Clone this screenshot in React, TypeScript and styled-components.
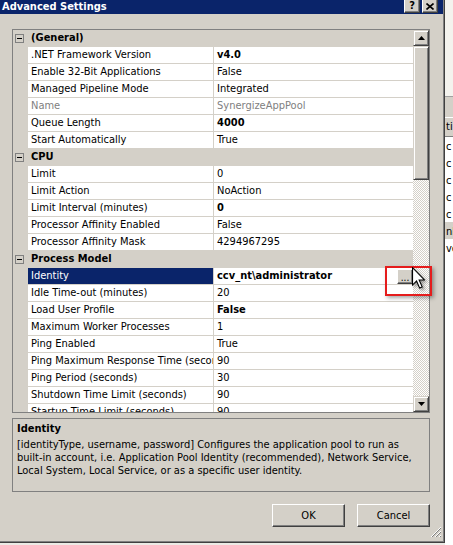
import React from 'react';
import styled, { createGlobalStyle } from 'styled-components';

const FACE = '#d4d0c8';
const NAVY = '#0a246a';

const GlobalStyle = createGlobalStyle`
  html, body {
    margin: 0;
    padding: 0;
    background: #fff;
    overflow: hidden;
  }
  body {
    font-family: "DejaVu Sans Condensed", "DejaVu Sans", "Liberation Sans", sans-serif;
    font-stretch: condensed;
    font-size: 11px;
    color: #000;
  }
`;

const Screen = styled.div`
  position: relative;
  display: flex;
  width: 453px;
  height: 545px;
  overflow: hidden;
  background: #ecebe6;
`;

const Dialog = styled.div`
  position: relative;
  flex: none;
  width: 445px;
  height: 543px;
  box-sizing: border-box;
  display: flex;
  flex-direction: column;
  background: ${FACE};
  border-right: 1px solid #404040;
  border-bottom: 1px solid #404040;
  box-shadow: inset -1px -1px 0 #808080;
`;

const TitleBar = styled.div`
  height: 14px;
  flex: none;
  display: flex;
  align-items: flex-start;
  padding: 0 5px 0 2px;
  margin-right: 1px;
  background: ${NAVY};
  color: #fff;
  font-weight: bold;
  line-height: 13px;
`;

const TitleText = styled.span`
  flex: 1;
  white-space: nowrap;
`;

const CaptionButton = styled.div<{ $gap?: number }>`
  width: 16px;
  height: 13px;
  margin-left: ${p => p.$gap ?? 0}px;
  box-sizing: border-box;
  display: flex;
  align-items: center;
  justify-content: center;
  background: ${FACE};
  color: #000;
  border-left: 1px solid #fff;
  border-right: 1px solid #404040;
  border-bottom: 1px solid #404040;
  box-shadow: inset -1px -1px 0 #808080;
  font-size: 11px;
  font-weight: bold;
  line-height: 12px;
`;

const Body = styled.div`
  flex: 1;
  display: flex;
  flex-direction: column;
  padding: 15px 14px 0 12px;
`;

const Grid = styled.div`
  height: 384px;
  flex: none;
  display: flex;
  box-sizing: border-box;
  border: 1px solid #808080;
  background: #fff;
`;

const Rows = styled.div`
  flex: 1;
  overflow: hidden;
`;

const Row = styled.div`
  display: grid;
  grid-template-columns: 15px 186px 1fr;
  height: 17px;
  box-sizing: border-box;
  border-bottom: 1px solid ${FACE};
  line-height: 16px;
  white-space: nowrap;
`;

const Margin = styled.div`
  background: ${FACE};
  display: flex;
  align-items: center;
  padding-left: 2px;
`;

const CategoryName = styled.div`
  grid-column: 2 / 4;
  background: ${FACE};
  font-weight: bold;
  padding-left: 3px;
`;

const Label = styled.div<{ $selected?: boolean; $dim?: boolean }>`
  padding-left: 3px;
  overflow: hidden;
  border-right: 1px solid ${FACE};
  background: ${p => (p.$selected ? NAVY : '#fff')};
  color: ${p => (p.$selected ? '#fff' : p.$dim ? '#808080' : '#000')};
`;

const Value = styled.div<{ $bold?: boolean; $dim?: boolean }>`
  display: flex;
  align-items: center;
  padding-left: 3px;
  overflow: hidden;
  font-weight: ${p => (p.$bold ? 'bold' : 'normal')};
  color: ${p => (p.$dim ? '#808080' : '#000')};
`;

const EllipsisButton = styled.div`
  margin-left: auto;
  width: 16px;
  height: 15px;
  box-sizing: border-box;
  display: flex;
  align-items: flex-end;
  justify-content: center;
  background: ${FACE};
  border-top: 1px solid #fff;
  border-left: 1px solid #fff;
  border-right: 1px solid #404040;
  border-bottom: 1px solid #404040;
  box-shadow: inset -1px -1px 0 #808080;
  font-weight: normal;
  font-size: 10px;
  line-height: 11px;
`;

const ScrollBar = styled.div`
  width: 16px;
  flex: none;
  display: flex;
  flex-direction: column;
`;

const ScrollButton = styled.div`
  height: 16px;
  flex: none;
  box-sizing: border-box;
  display: flex;
  align-items: center;
  justify-content: center;
  background: ${FACE};
  border-top: 1px solid ${FACE};
  border-left: 1px solid ${FACE};
  border-right: 1px solid #404040;
  border-bottom: 1px solid #404040;
  box-shadow: inset 1px 1px 0 #fff, inset -1px -1px 0 #808080;
`;

const Thumb = styled(ScrollButton)`
  height: 134px;
`;

const Track = styled.div`
  flex: 1;
  background-color: #fff;
  background-image: conic-gradient(${FACE} 25%, #fff 0 50%, ${FACE} 0 75%, #fff 0);
  background-size: 2px 2px;
`;

const Description = styled.div`
  margin-top: 5px;
  height: 74px;
  flex: none;
  box-sizing: border-box;
  border: 1px solid #808080;
  padding: 3px 4px;
  line-height: 13px;
`;

const DescTitle = styled.div`
  font-weight: bold;
  margin-bottom: 3px;
`;

const DescLine = styled.div`
  white-space: nowrap;
`;

const ButtonRow = styled.div`
  margin-top: 12px;
  display: flex;
  justify-content: flex-end;
  gap: 12px;
`;

const PushButton = styled.div`
  width: 73px;
  height: 23px;
  box-sizing: border-box;
  display: flex;
  align-items: center;
  justify-content: center;
  background: ${FACE};
  border-top: 1px solid #fff;
  border-left: 1px solid #fff;
  border-right: 1px solid #404040;
  border-bottom: 1px solid #404040;
  box-shadow: inset -1px -1px 0 #808080;
`;

const Grip = styled.svg`
  position: absolute;
  right: 2px;
  bottom: 4px;
`;

const BackWindow = styled.div`
  flex: 1;
  display: flex;
  flex-direction: column;
  background: #fff;
  overflow: hidden;
  white-space: nowrap;
`;

const BackTop = styled.div`
  height: 96px;
  flex: none;
  background: #f4f3ee;
`;

const BackBox = styled.div`
  height: 21px;
  flex: none;
  box-sizing: border-box;
  border-top: 1px solid #a0a0a0;
  background: ${FACE};
`;

const BackHeader = styled.div`
  height: 20px;
  flex: none;
  box-sizing: border-box;
  border-top: 1px solid #fff;
  border-bottom: 1px solid #808080;
  background: ${FACE};
  line-height: 18px;
  padding-left: 1px;
`;

const BackItem = styled.div<{ $selected?: boolean }>`
  height: 17px;
  flex: none;
  line-height: 19px;
  padding-left: 1px;
  background: ${p => (p.$selected ? FACE : 'transparent')};
`;

const Annotation = styled.div`
  position: absolute;
  left: 385px;
  top: 266px;
  width: 47px;
  height: 30px;
  box-sizing: border-box;
  border: 2px solid #e51c1c;
  box-shadow: 2px 2px 4px rgba(0, 0, 0, 0.35);
`;

const Cursor = styled.svg`
  position: absolute;
  left: 412px;
  top: 267px;
  filter: drop-shadow(2px 2px 1.5px rgba(0, 0, 0, 0.35));
`;

type Item = { label: string; value: string; bold?: boolean; dim?: boolean; selected?: boolean };
type Category = { name: string; items: Item[] };

const categories: Category[] = [
  {
    name: '(General)',
    items: [
      { label: '.NET Framework Version', value: 'v4.0', bold: true },
      { label: 'Enable 32-Bit Applications', value: 'False' },
      { label: 'Managed Pipeline Mode', value: 'Integrated' },
      { label: 'Name', value: 'SynergizeAppPool', dim: true },
      { label: 'Queue Length', value: '4000', bold: true },
      { label: 'Start Automatically', value: 'True' },
    ],
  },
  {
    name: 'CPU',
    items: [
      { label: 'Limit', value: '0' },
      { label: 'Limit Action', value: 'NoAction' },
      { label: 'Limit Interval (minutes)', value: '0', bold: true },
      { label: 'Processor Affinity Enabled', value: 'False' },
      { label: 'Processor Affinity Mask', value: '4294967295' },
    ],
  },
  {
    name: 'Process Model',
    items: [
      { label: 'Identity', value: 'ccv_nt\\administrator', bold: true, selected: true },
      { label: 'Idle Time-out (minutes)', value: '20' },
      { label: 'Load User Profile', value: 'False', bold: true },
      { label: 'Maximum Worker Processes', value: '1' },
      { label: 'Ping Enabled', value: 'True' },
      { label: 'Ping Maximum Response Time (seconds)', value: '90' },
      { label: 'Ping Period (seconds)', value: '30' },
      { label: 'Shutdown Time Limit (seconds)', value: '90' },
      { label: 'Startup Time Limit (seconds)', value: '90' },
    ],
  },
];

function MinusBox() {
  return (
    <svg width="9" height="9" viewBox="0 0 9 9">
      <rect x="0.5" y="0.5" width="8" height="8" fill="none" stroke="#808080" />
      <path d="M2 4.5h5" stroke="#000" />
    </svg>
  );
}

function Arrow({ down }: { down?: boolean }) {
  return (
    <svg width="7" height="4" viewBox="0 0 7 4">
      <path d={down ? 'M0 0h7L3.5 4z' : 'M3.5 0L7 4H0z'} fill="#000" />
    </svg>
  );
}

export default function App() {
  return (
    <Screen>
      <GlobalStyle />
      <Dialog>
        <TitleBar>
          <TitleText>Advanced Settings</TitleText>
          <CaptionButton>?</CaptionButton>
          <CaptionButton $gap={2}>
            <svg width="8" height="7" viewBox="0 0 8 7">
              <path d="M0.5 0.5l7 6M7.5 0.5l-7 6" stroke="#000" strokeWidth="1.6" />
            </svg>
          </CaptionButton>
        </TitleBar>
        <Body>
          <Grid>
            <Rows>
              {categories.map(cat => (
                <React.Fragment key={cat.name}>
                  <Row>
                    <Margin>
                      <MinusBox />
                    </Margin>
                    <CategoryName>{cat.name}</CategoryName>
                  </Row>
                  {cat.items.map(it => (
                    <Row key={it.label}>
                      <Margin />
                      <Label $selected={it.selected} $dim={it.dim}>
                        {it.label}
                      </Label>
                      <Value $bold={it.bold} $dim={it.dim}>
                        {it.value}
                        {it.selected && <EllipsisButton>...</EllipsisButton>}
                      </Value>
                    </Row>
                  ))}
                </React.Fragment>
              ))}
            </Rows>
            <ScrollBar>
              <ScrollButton>
                <Arrow />
              </ScrollButton>
              <Thumb />
              <Track />
              <ScrollButton>
                <Arrow down />
              </ScrollButton>
            </ScrollBar>
          </Grid>
          <Description>
            <DescTitle>Identity</DescTitle>
            <DescLine>[identityType, username, password] Configures the application pool to run as</DescLine>
            <DescLine>built-in account, i.e. Application Pool Identity (recommended), Network Service,</DescLine>
            <DescLine>Local System, Local Service, or as a specific user identity.</DescLine>
          </Description>
          <ButtonRow>
            <PushButton>OK</PushButton>
            <PushButton>Cancel</PushButton>
          </ButtonRow>
        </Body>
        <Grip width="12" height="12" viewBox="0 0 12 12">
          <path d="M11 1L1 11M11 5L5 11M11 9L9 11" stroke="#fff" />
          <path d="M11 2L2 11M11 6L6 11M11 10L10 11" stroke="#808080" />
        </Grip>
      </Dialog>
      <BackWindow>
        <BackTop />
        <BackBox />
        <BackHeader>ti</BackHeader>
        <BackItem>c</BackItem>
        <BackItem>c</BackItem>
        <BackItem>c</BackItem>
        <BackItem>c</BackItem>
        <BackItem>c</BackItem>
        <BackItem $selected>nl</BackItem>
        <BackItem>vc</BackItem>
      </BackWindow>
      <Annotation />
      <Cursor width="13" height="22" viewBox="0 0 12 20">
        <path d="M0.5 0.5V16.5L4.2 12.8L7 19.2L9.4 18.2L6.6 11.8H11.5Z" fill="#fff" stroke="#000" strokeWidth="1" />
      </Cursor>
    </Screen>
  );
}
